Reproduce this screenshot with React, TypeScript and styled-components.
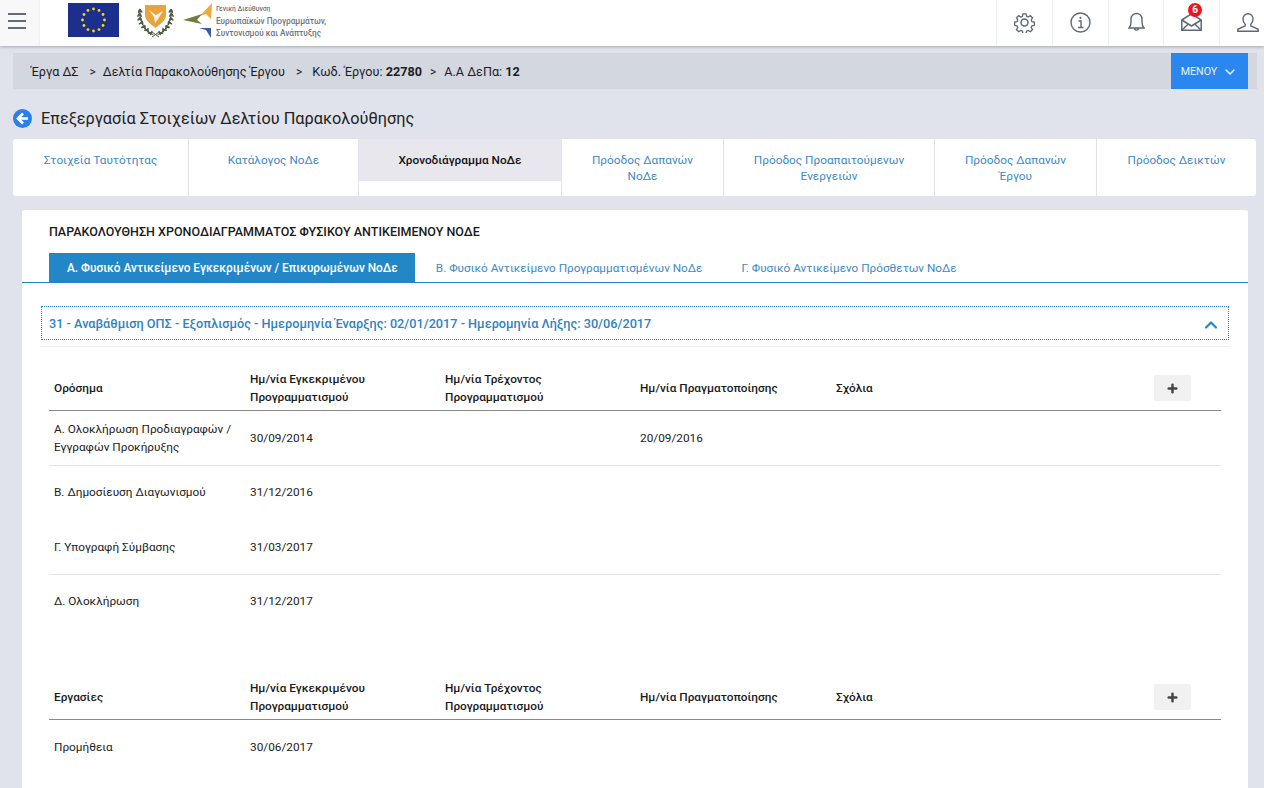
import React from 'react';
import styled, { createGlobalStyle } from 'styled-components';
import { ChevronDown, ChevronUp, Plus } from 'lucide-react';

const GlobalStyle = createGlobalStyle`
  html, body {
    margin: 0;
    height: 788px;
    overflow: hidden;
    background: #e0e3ec;
    font-family: Roboto, "Noto Sans", sans-serif;
    color: #222;
  }
  * { box-sizing: border-box; }
`;

const TopBar = styled.header`
  display: flex;
  align-items: stretch;
  height: 46px;
  overflow: hidden;
  background: #fff;
  box-shadow: 0 1px 3px rgba(0, 0, 0, 0.25);
`;

const MenuCell = styled.div`
  width: 40px;
  background: #f8f8f8;
  border-right: 1px solid #f0f0f0;
  padding: 13px 8px 0;
`;

const BurgerLine = styled.div`
  height: 2px;
  width: 18px;
  background: #666c74;
  margin-bottom: 5px;
`;

const Logos = styled.div`
  display: flex;
  align-items: flex-start;
  flex: 1;
  padding: 3px 0 0 28px;
`;

const CrestSlot = styled.div`
  margin: 0 9px 0 18px;
`;

const ArrowSlot = styled.div`
  margin-top: -1px;
`;

const LogoText = styled.div`
  margin: 0 0 0 3px;
  font-size: 9.6px;
  line-height: 12px;
  color: #6f747c;
  font-weight: 500;
  white-space: nowrap;
  transform: scaleX(0.86);
  transform-origin: left top;
`;

const LogoSmall = styled.div`
  font-size: 7.8px;
  line-height: 11px;
  margin-bottom: 1px;
`;

const IconCell = styled.div<{ $w?: number }>`
  position: relative;
  flex: none;
  width: ${(p) => p.$w ?? 56}px;
  display: flex;
  align-items: center;
  justify-content: center;
  padding-bottom: 2px;
  border-left: 1px solid #eceef0;
  color: #5f6873;
  &:last-child { margin-right: -11px; }
`;

const Badge = styled.span`
  position: absolute;
  top: 3px;
  left: 24px;
  width: 14px;
  height: 14px;
  border-radius: 50%;
  background: #f0141e;
  color: #fff;
  font-size: 10px;
  font-weight: 700;
  line-height: 14px;
  text-align: center;
`;

const Crumbs = styled.nav`
  display: flex;
  align-items: center;
  height: 36px;
  margin: 7px 7px 0 13px;
  padding: 0 9px 0 18px;
  background: #d3d7e0;
  font-size: 12.65px;
  color: #1d1d1d;
`;

const Crumb = styled.span`
  white-space: nowrap;
  padding-top: 1px;
`;

const CrumbSep = styled.span<{ $after: number; $before?: number }>`
  margin: 0 ${(p) => p.$after}px 0 ${(p) => p.$before ?? 11}px;
  font-size: 12px;
  padding-top: 1px;
`;

const MenuButton = styled.button`
  margin-left: auto;
  width: 77px;
  height: 36px;
  border: 0;
  padding: 1px 0 0;
  display: flex;
  align-items: center;
  justify-content: center;
  gap: 5px;
  background: #2a87ee;
  color: #e8f2ff;
  font: 400 10.7px Roboto, sans-serif;
`;

const TitleRow = styled.div`
  display: flex;
  align-items: center;
  gap: 9px;
  height: 22px;
  margin: 18px 0 10px 13px;
`;

const Title = styled.h1`
  margin: 0;
  font-size: 16.3px;
  font-weight: 400;
  color: #222;
`;

const TabBar = styled.div`
  display: flex;
  height: 57px;
  margin: 0 8px 0 13px;
  background: #fff;
  border-radius: 3px;
`;

const Tab = styled.div<{ $w: number; $active?: boolean }>`
  width: ${(p) => p.$w}px;
  height: ${(p) => (p.$active ? '42px' : 'auto')};
  border-right: 1px solid #e2e3e8;
  padding: 13px 16px 0;
  text-align: center;
  font-size: 11.8px;
  line-height: 16px;
  color: ${(p) => (p.$active ? '#111' : '#3d8ac4')};
  font-weight: ${(p) => (p.$active ? 500 : 400)};
  background: ${(p) => (p.$active ? '#e7e7ed' : 'transparent')};
  &:last-child { border-right: 0; }
`;

const ActiveTabSlot = styled.div`
  border-right: 1px solid #e2e3e8;
  display: flex;
`;

const Card = styled.main`
  height: 600px;
  margin: 14px 16px 0 22px;
  background: #fff;
  border-radius: 3px 3px 0 0;
`;

const CardTitle = styled.h2`
  margin: 0;
  padding: 14px 0 0 27px;
  height: 43px;
  font-size: 12.5px;
  line-height: 16px;
  font-weight: 500;
  color: #1a1a1a;
`;

const SubTabs = styled.div`
  display: flex;
  height: 30px;
  padding-left: 27px;
  border-bottom: 1px solid #2387c7;
`;

const SubTab = styled.div<{ $active?: boolean }>`
  height: 29px;
  padding: ${(p) => (p.$active ? '0 17px 0 18px' : '0 18px')};
  margin-right: 3px;
  font-size: ${(p) => (p.$active ? '11.85px' : '11.75px')};
  line-height: 30px;
  white-space: nowrap;
  font-weight: ${(p) => (p.$active ? 500 : 400)};
  background: ${(p) => (p.$active ? '#2387c7' : 'transparent')};
  color: ${(p) => (p.$active ? '#fff' : '#3d8ac4')};
`;

const AccordionHead = styled.div`
  display: flex;
  align-items: center;
  justify-content: space-between;
  height: 34px;
  margin: 23px 19px 0;
  padding: 0 7px 0 7px;
  border: 1px dotted #2387c7;
  font-size: 12.7px;
  font-weight: 500;
  color: #2f83bf;
`;

const AccordionChevron = styled.span`
  display: flex;
  margin-top: 4px;
  color: #2387c7;
`;

const Divider = styled.div`
  height: 1px;
  margin: 6px 18px 0;
  background: #eeeeee;
`;

const Panel = styled.section`
  margin: 0 27px;
`;

const HeadRow = styled.div`
  display: grid;
  grid-template-columns: 196px 195px 195px 196px 1fr 67px;
  align-items: center;
  height: 64px;
  padding: 18px 0 0 5px;
  border-bottom: 1px solid #888;
  font-size: 11.8px;
  line-height: 18px;
  font-weight: 500;
  color: #1a1a1a;
`;

const AddButton = styled.button`
  width: 37px;
  height: 26px;
  margin-top: 1px;
  border: 0;
  padding: 0;
  border-radius: 2px;
  display: flex;
  align-items: center;
  justify-content: center;
  background: #f1f1f1;
  color: #444;
`;

const Row = styled.div<{ $line?: boolean }>`
  display: grid;
  grid-template-columns: 196px 195px 195px 196px 1fr 67px;
  align-items: center;
  height: 54.5px;
  padding-left: 5px;
  border-bottom: 1px solid ${(p) => (p.$line ? '#e4e4e4' : 'transparent')};
  font-size: 11.8px;
  line-height: 18px;
  color: #222;
`;

const Section = styled.div`
  margin-top: 27px;
`;

const EuFlag = () => (
  <svg width="51" height="34" viewBox="0 0 51 34">
    <rect width="51" height="34" fill="#1c2f8c" />
    {Array.from({ length: 12 }).map((_, i) => {
      const a = (i * Math.PI) / 6;
      return <circle key={i} cx={25.5 + 11 * Math.cos(a)} cy={17 + 11 * Math.sin(a)} r="1.4" fill="#f5d90a" />;
    })}
  </svg>
);

// olive leaves along one side of the crest, the other side is mirrored
const LEAVES = [
  [3, 8, 80],
  [2.6, 12, 90],
  [3, 16, 100],
  [4.6, 20, 115],
  [7, 24, 125],
  [10, 27, 135],
  [13.5, 30, 145],
];

const Branch = () => (
  <>
    <path d="M3.500 6c-2 9 1 19 13 26" fill="none" stroke="#4f5a45" strokeWidth="1" />
    {LEAVES.map(([x, y, r]) => (
      <React.Fragment key={y}>
        <ellipse cx={x - 0.8} cy={y} rx="2.300" ry="1" fill="#4f5a45" transform={`rotate(${r + 35} ${x - 0.8} ${y})`} />
        <ellipse cx={x + 0.8} cy={y} rx="2.300" ry="1" fill="#4f5a45" transform={`rotate(${r - 35} ${x + 0.8} ${y})`} />
      </React.Fragment>
    ))}
  </>
);

const CyprusCrest = () => (
  <svg width="37" height="35" viewBox="0 0 37 35">
    <path d="M8 2h21v10c0 6-6 9-10.500 13C14 21 8 18 8 12z" fill="#e8a33c" />
    <path d="M12 7l7 5 7-4-5 8-3 4-1-6z" fill="#fbf3e4" />
    <Branch />
    <g transform="matrix(-1 0 0 1 37 0)">
      <Branch />
    </g>
    <path d="M15 29l7 5M22 29l-7 5" stroke="#4f5a45" strokeWidth="1" />
  </svg>
);

const Arrows = () => (
  <svg width="30" height="38" viewBox="0 0 30 38">
    <polygon points="29,1 17,14 23,12 28,17" fill="#f2a93b" />
    <polygon points="0,18 19,12 14,18 19,22" fill="#6f7f3a" />
    <polygon points="16,26 28,26 28,36 23,28" fill="#3c5aa6" />
  </svg>
);

const Gear = () => (
  <svg width="21" height="21" viewBox="0 0 24 24" fill="none" stroke="currentColor" strokeWidth="1.700">
    <path d="M10 1.500h4l.6 3 2.200 1 2.600-1.700 2.800 2.800-1.700 2.600 1 2.200 3 .6v4l-3 .6-1 2.200 1.700 2.600-2.800 2.800-2.600-1.700-2.200 1-.6 3h-4l-.6-3-2.200-1-2.600 1.700-2.800-2.800 1.700-2.600-1-2.200-3-.6v-4l3-.6 1-2.200-1.700-2.600 2.800-2.800 2.600 1.700 2.200-1z" transform="translate(1.200 0.800) scale(.9)" />
    <circle cx="12" cy="12" r="4" />
  </svg>
);

const Info = () => (
  <svg width="21" height="21" viewBox="0 0 21 21" fill="none" stroke="currentColor" strokeWidth="1.400">
    <circle cx="10.500" cy="10.500" r="9.500" />
    <path d="M8.500 9h2.500v6.500M8 15.500h5.500" />
    <circle cx="10.500" cy="5.800" r="1.100" fill="currentColor" stroke="none" />
  </svg>
);

const Bell = () => (
  <svg width="17" height="20" viewBox="0 0 17 20" fill="none" stroke="currentColor" strokeWidth="1.400">
    <path d="M1 16c1.500-1.500 2-3 2-6V7a5.500 5.500 0 0 1 11 0v3c0 3 .5 4.500 2 6z" />
    <path d="M6.500 16c0 2.800 4 2.800 4 0" />
  </svg>
);

const Mail = () => (
  <svg width="21" height="18" viewBox="0 0 21 18" fill="none" stroke="currentColor" strokeWidth="1.500">
    <path d="M.8 7L10.500.8 20.200 7v10.200H.8z" />
    <path d="M.8 7l9.700 6 9.700-6M.8 17.200l6.500-6.200M20.200 17.200L13.700 11" />
  </svg>
);

const User = () => (
  <svg width="22" height="19" viewBox="0 0 22 19" fill="none" stroke="currentColor" strokeWidth="1.400">
    <path d="M11 .8c3 0 5 2.200 5 5.200 0 2.300-1 4-2.200 5.300v1.500l7.400 3.500v2H.8v-2l7.400-3.500v-1.500C7 10 6 8.300 6 6c0-3 2-5.200 5-5.200z" />
  </svg>
);

const BackIcon = () => (
  <svg width="19" height="19" viewBox="0 0 19 19">
    <circle cx="9.500" cy="9.500" r="9.500" fill="#2a80ea" />
    <path d="M10 4.500L5 9.500l5 5M5.500 9.500H15" fill="none" stroke="#fff" strokeWidth="2.600" />
  </svg>
);

const TABS = [
  { w: 176, label: 'Στοιχεία Ταυτότητας' },
  { w: 170, label: 'Κατάλογος ΝοΔε' },
  { w: 203, label: 'Χρονοδιάγραμμα ΝοΔε', active: true },
  { w: 162, label: 'Πρόοδος Δαπανών ΝοΔε' },
  { w: 211, label: 'Πρόοδος Προαπαιτούμενων Ενεργειών' },
  { w: 162, label: 'Πρόοδος Δαπανών Έργου' },
  { w: 159, label: 'Πρόοδος Δεικτών' },
];

function TableHead({ first }: { first: string }) {
  return (
    <HeadRow>
      <span>{first}</span>
      <span>
        Ημ/νία Εγκεκριμένου
        <br />
        Προγραμματισμού
      </span>
      <span>
        Ημ/νία Τρέχοντος
        <br />
        Προγραμματισμού
      </span>
      <span>Ημ/νία Πραγματοποίησης</span>
      <span>Σχόλια</span>
      <AddButton>
        <Plus size={13} strokeWidth={4.5} />
      </AddButton>
    </HeadRow>
  );
}

export default function App(): React.ReactElement {
  return (
    <>
      <GlobalStyle />
      <TopBar>
        <MenuCell>
          <BurgerLine />
          <BurgerLine />
          <BurgerLine />
        </MenuCell>
        <Logos>
          <EuFlag />
          <CrestSlot><CyprusCrest /></CrestSlot>
          <ArrowSlot><Arrows /></ArrowSlot>
          <LogoText>
            <LogoSmall>Γενική Διεύθυνση</LogoSmall>
            Ευρωπαϊκών Προγραμμάτων,
            <br />
            Συντονισμού και Ανάπτυξης
          </LogoText>
        </Logos>
        <IconCell><Gear /></IconCell>
        <IconCell><Info /></IconCell>
        <IconCell $w={55}><Bell /></IconCell>
        <IconCell>
          <Mail />
          <Badge>6</Badge>
        </IconCell>
        <IconCell><User /></IconCell>
      </TopBar>

      <Crumbs>
        <Crumb>Έργα ΔΣ</Crumb>
        <CrumbSep $after={7}>&gt;</CrumbSep>
        <Crumb>Δελτία Παρακολούθησης Έργου</Crumb>
        <CrumbSep $after={10}>&gt;</CrumbSep>
        <Crumb>Κωδ. Έργου: <b>22780</b></Crumb>
        <CrumbSep $after={8} $before={8}>&gt;</CrumbSep>
        <Crumb>Α.Α ΔεΠα: <b>12</b></Crumb>
        <MenuButton>
          ΜΕΝΟΥ <ChevronDown size={16} strokeWidth={2.2} />
        </MenuButton>
      </Crumbs>

      <TitleRow>
        <BackIcon />
        <Title>Επεξεργασία Στοιχείων Δελτίου Παρακολούθησης</Title>
      </TitleRow>

      <TabBar>
        {TABS.map((t) =>
          t.active ? (
            <ActiveTabSlot key={t.label}>
              <Tab $w={t.w - 1} $active>{t.label}</Tab>
            </ActiveTabSlot>
          ) : (
            <Tab key={t.label} $w={t.w}>{t.label}</Tab>
          ),
        )}
      </TabBar>

      <Card>
        <CardTitle>ΠΑΡΑΚΟΛΟΥΘΗΣΗ ΧΡΟΝΟΔΙΑΓΡΑΜΜΑΤΟΣ ΦΥΣΙΚΟΥ ΑΝΤΙΚΕΙΜΕΝΟΥ ΝΟΔΕ</CardTitle>
        <SubTabs>
          <SubTab $active>Α. Φυσικό Αντικείμενο Εγκεκριμένων / Επικυρωμένων ΝοΔε</SubTab>
          <SubTab>Β. Φυσικό Αντικείμενο Προγραμματισμένων ΝοΔε</SubTab>
          <SubTab>Γ. Φυσικό Αντικείμενο Πρόσθετων ΝοΔε</SubTab>
        </SubTabs>
        <AccordionHead>
          <span>31 - Αναβάθμιση ΟΠΣ - Εξοπλισμός - Ημερομηνία Έναρξης: 02/01/2017 - Ημερομηνία Λήξης: 30/06/2017</span>
          <AccordionChevron>
            <ChevronUp size={20} strokeWidth={2.6} />
          </AccordionChevron>
        </AccordionHead>
        <Divider />
        <Panel>
          <TableHead first="Ορόσημα" />
          <Row $line>
            <span>Α. Ολοκλήρωση Προδιαγραφών / Εγγραφών Προκήρυξης</span>
            <span>30/09/2014</span>
            <span />
            <span>20/09/2016</span>
          </Row>
          <Row>
            <span>Β. Δημοσίευση Διαγωνισμού</span>
            <span>31/12/2016</span>
          </Row>
          <Row $line>
            <span>Γ. Υπογραφή Σύμβασης</span>
            <span>31/03/2017</span>
          </Row>
          <Row>
            <span>Δ. Ολοκλήρωση</span>
            <span>31/12/2017</span>
          </Row>
          <Section>
            <TableHead first="Εργασίες" />
            <Row>
              <span>Προμήθεια</span>
              <span>30/06/2017</span>
            </Row>
          </Section>
        </Panel>
      </Card>
    </>
  );
}
